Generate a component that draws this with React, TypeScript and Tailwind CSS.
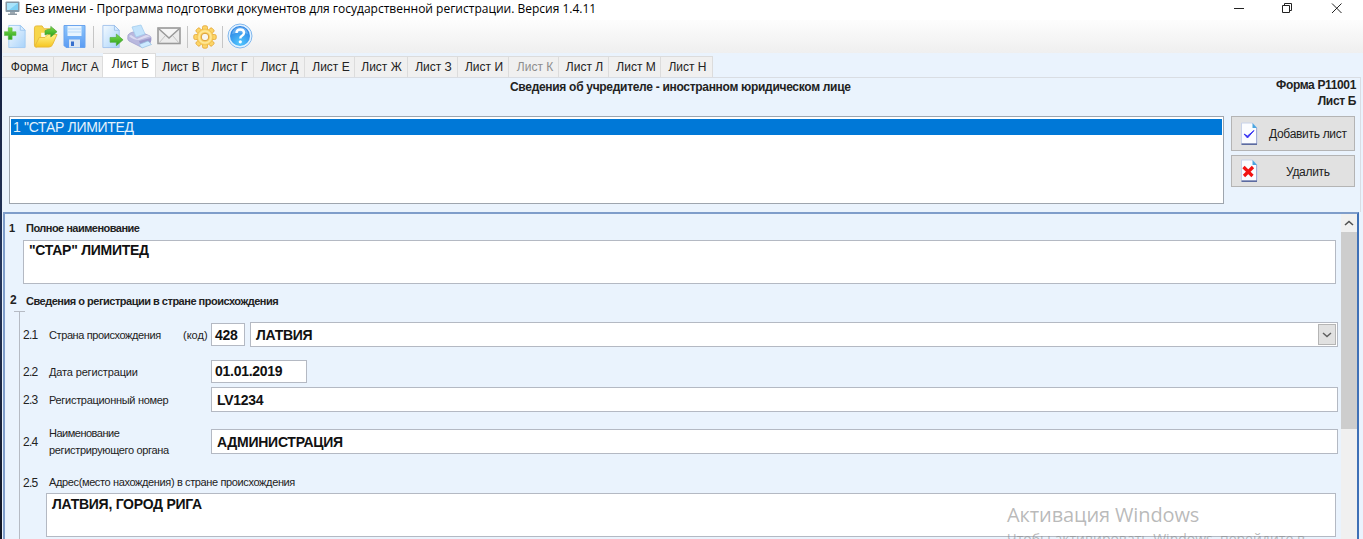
import type { ReactNode } from "react";

const tabs = [
  { label: "Форма", box: "w-[51px] h-[21px] bg-[#f0f0f0] pl-[3px]" },
  { label: "Лист А", box: "w-[49px] h-[21px] bg-[#f0f0f0] pl-[4px]" },
  { label: "Лист Б", box: "w-[53px] h-6 bg-white pb-[3px] pl-[3px]" },
  { label: "Лист В", box: "w-[48px] h-[21px] bg-[#f0f0f0] pl-[3px]" },
  { label: "Лист Г", box: "w-[50px] h-[21px] bg-[#f0f0f0] pl-[2px]" },
  { label: "Лист Д", box: "w-[51px] h-[21px] bg-[#f0f0f0] pl-[1px]" },
  { label: "Лист Е", box: "w-[50px] h-[21px] bg-[#f0f0f0] pl-[3px]" },
  { label: "Лист Ж", box: "w-[53px] h-[21px] bg-[#f0f0f0] pl-[1px]" },
  { label: "Лист З", box: "w-[50px] h-[21px] bg-[#f0f0f0] pl-[2px]" },
  { label: "Лист И", box: "w-[51px] h-[21px] bg-[#f0f0f0] pl-[2px]" },
  { label: "Лист К", box: "w-[50px] h-[21px] bg-[#f0f0f0] pl-[3px] text-[#8d8d8d]" },
  { label: "Лист Л", box: "w-[50px] h-[21px] bg-[#f0f0f0] pl-[2px]" },
  { label: "Лист М", box: "w-[52px] h-[21px] bg-[#f0f0f0] pl-[3px]" },
  { label: "Лист Н", box: "w-[52px] h-[21px] bg-[#f0f0f0] pl-[2px]" },
];

function MonitorIcon() {
  return (
    <svg width="15" height="15" viewBox="0 0 15 15">
      <rect x="0.5" y="0.5" width="14" height="10.500" rx="1" fill="#8497a5" />
      <rect x="2" y="2" width="11" height="7" fill="#7dd0f5" />
      <path d="M2 2h11L4 9H2z" fill="#a8e3fb" />
      <path d="M5 11h5v2H5z" fill="#9fabb4" />
      <path d="M3 12.600h9V14H3z" fill="#8d9aa4" />
    </svg>
  );
}

function Defs() {
  return (
    <defs>
      <linearGradient id="page" x1="0" y1="0" x2="1" y2="1">
        <stop offset="0" stopColor="#f4faff" />
        <stop offset="1" stopColor="#a9d3fa" />
      </linearGradient>
      <linearGradient id="green" x1="0" y1="0" x2="0" y2="1">
        <stop offset="0" stopColor="#7ddb4a" />
        <stop offset="1" stopColor="#27a01c" />
      </linearGradient>
      <linearGradient id="gold" x1="0" y1="0" x2="0" y2="1">
        <stop offset="0" stopColor="#fff38a" />
        <stop offset="1" stopColor="#f6c51e" />
      </linearGradient>
      <linearGradient id="disk" x1="0" y1="0" x2="0" y2="1">
        <stop offset="0" stopColor="#8cc4fb" />
        <stop offset="1" stopColor="#5b9cf3" />
      </linearGradient>
      <radialGradient id="help" cx="0.5" cy="0.85" r="0.8">
        <stop offset="0" stopColor="#52c8ff" />
        <stop offset="1" stopColor="#2b80e2" />
      </radialGradient>
    </defs>
  );
}

function NewIcon() {
  return (
    <svg width="23" height="25" viewBox="0 0 23 26">
      <Defs />
      <path d="M4.500 1.500h12l5 5v18h-17z" fill="url(#page)" stroke="#a4ccf2" />
      <path d="M16.500 1.500v5h5z" fill="#d9edff" stroke="#92c0ee" strokeWidth="0.800" />
      <path d="M4 4h4v4h4v4H8v4H4v-4H0V8h4z" fill="url(#green)" stroke="#5dbb43" strokeWidth="0.600" />
    </svg>
  );
}

function OpenIcon() {
  return (
    <svg width="25" height="25" viewBox="0 0 25 26">
      <path d="M1 4q0-2 2-2h6l2 3h9q2 0 2 2v7L3 24q-2 0-2-2z" fill="#f7d64a" stroke="#e5b83c" />
      <path d="M8 9h10l4-1v7L8 21z" fill="#fffbe5" />
      <path d="M1.500 23 6 14h6l3-3h9.500L20 21q-1 3-4 3H3q-1.500 0-1.500-1z" fill="url(#gold)" stroke="#e8b93a" />
      <path d="M12 7q3-2 6-1.500V2.500l6.500 5.500-6.500 5.500v-3q-4-.500-6 1z" fill="url(#green)" stroke="#4aa33c" strokeWidth="0.700" />
    </svg>
  );
}

function SaveIcon() {
  return (
    <svg width="23" height="25" viewBox="0 0 23 25">
      <path d="M1 1.500h21v22H3l-2-2z" fill="url(#disk)" stroke="#6ba4ee" />
      <path d="M4.500 2h14v10h-14z" fill="#e8f4ff" />
      <path d="M4.500 5h14M4.500 8h14" stroke="#b8d9f8" />
      <path d="M6 15.500h11v8H6z" fill="#dce6f2" />
      <path d="M8 17.500h3V22H8z" fill="#376fce" />
    </svg>
  );
}

function ExportIcon() {
  return (
    <svg width="23" height="25" viewBox="0 0 23 26">
      <path d="M1.500 1.500h12l5 5v18h-17z" fill="url(#page)" stroke="#a4c4ec" />
      <path d="M13.500 1.500v5h5z" fill="#d9edff" stroke="#92b8e8" strokeWidth="0.800" />
      <path d="M9 14h6.500v-3.500l7 6-7 6V19H9z" fill="url(#green)" stroke="#4fa93c" strokeWidth="0.700" />
    </svg>
  );
}

function PrintIcon() {
  return (
    <svg width="25" height="25" viewBox="0 0 25 25">
      <path d="M1 11q1-2 5-3l10 1 7 3q1.500 1 1 4l-1 3-9 4-12-6Q0 16 1 11z" fill="#b9b8de" stroke="#a3a2cf" strokeWidth="0.800" />
      <path d="M5 3 14 1l4 9-9 3z" fill="#c4e4fc" stroke="#a3cdee" strokeWidth="0.800" />
      <path d="M2 12q4 4 10 4l12-4-5-1-9 4-6-4z" fill="#dcdbf1" />
      <path d="M12 17l12-3v4l-10 4z" fill="#9a98cb" />
      <path d="M12 20.500 21 17l3.500 3.500L15 24z" fill="#cdeaff" stroke="#94bfe0" strokeWidth="0.700" />
    </svg>
  );
}

function MailIcon() {
  return (
    <svg width="24" height="18" viewBox="0 0 24 18">
      <rect x="1" y="1" width="22" height="15.500" fill="#ececec" stroke="#9a9a9a" strokeWidth="1.600" />
      <path d="M2 2h20L12 11z" fill="#f6f6f6" />
      <path d="M2 2 12 11 22 2" fill="none" stroke="#999" strokeWidth="1.500" />
      <path d="M2 16l6-7M22 16l-6-7" stroke="#c4c4c4" />
    </svg>
  );
}

const teeth = [0, 45, 90, 135, 180, 225, 270, 315];

function GearIcon() {
  return (
    <svg width="24" height="24" viewBox="0 0 24 24">
      {teeth.map((a) => (
        <rect key={a} x="9.500" y="0.800" width="5" height="6" rx="1.500" fill="#fcd566" stroke="#e6ab40" strokeWidth="0.900" transform={`rotate(${a} 12 12)`} />
      ))}
      <circle cx="12" cy="12" r="8" fill="#fcd769" stroke="#ecb545" strokeWidth="0.600" />
      <circle cx="12" cy="12" r="6" fill="none" stroke="#ffe79a" strokeWidth="1.500" />
      <circle cx="12" cy="12" r="3.800" fill="#f8f5ef" stroke="#dc9c2e" />
    </svg>
  );
}

function HelpIcon() {
  return (
    <svg width="26" height="26" viewBox="0 0 26 26">
      <circle cx="13" cy="13" r="12" fill="#e2f2ff" stroke="#82b8ee" />
      <circle cx="13" cy="13" r="10" fill="url(#help)" />
      <path d="M5 11q1-7 8-7t8 7q-8-3-16 0z" fill="#79bcf5" opacity="0.700" />
      <path d="M9.500 10q0-3.500 3.700-3.500T17 9.700q0 1.800-2 3.100-1.700 1-1.700 2.700" fill="none" stroke="#fff" strokeWidth="2.400" />
      <circle cx="13.300" cy="18.800" r="1.600" fill="#fff" />
    </svg>
  );
}

function SheetIcon({ children }: { children: ReactNode }) {
  return (
    <svg width="17" height="24" viewBox="0 0 17 24">
      <path d="M0.500 1h11l4.500 5v16H0.500z" fill="#fbfcff" stroke="#c8d2ea" />
      <path d="M11.500 1v5H16z" fill="#4ba5e0" />
      <path d="M15.500 6v16" stroke="#a5b0d6" />
      <path d="M0.500 22.200H16" stroke="#5c6ba0" strokeWidth="1.600" />
      {children}
    </svg>
  );
}

function Separator({ className }: { className: string }) {
  return <div className={"h-[22px] w-px bg-[#c6c6c6] " + className} />;
}

function Field({ className, children }: { className: string; children?: ReactNode }) {
  return (
    <div className={"flex shrink-0 border border-[#b4b9c3] bg-white text-[14px] leading-4 font-bold tracking-[-0.270px] whitespace-nowrap text-[#111] " + className}>
      {children}
    </div>
  );
}

function Num({ children }: { children: ReactNode }) {
  return <span className="w-[26px] shrink-0 text-[12px] tracking-[-0.700px]">{children}</span>;
}

export default function App() {
  return (
    <div className="relative flex h-[539px] w-[1363px] overflow-hidden bg-[#eaf3fd] font-['Liberation_Sans',sans-serif] text-[#222]">
      <div className="w-[2px] shrink-0 bg-linear-to-b from-[#101a38] via-[#25365c] to-[#111522]" />
      <div className="flex min-w-0 flex-1 flex-col">
        <header className="flex h-5 shrink-0 items-center bg-white pl-[3px]">
          <div className="pb-[4px]"><MonitorIcon /></div>
          <span className="ml-[5px] pb-[3px] font-['Open_Sans',sans-serif] text-[12px] leading-4 whitespace-nowrap text-black">
            Без имени - Программа подготовки документов для государственной регистрации. Версия 1.4.11
          </span>
          <div className="mr-5 ml-auto flex items-center pb-1">
            <svg width="110" height="12" viewBox="0 0 110 12" fill="none" stroke="#222">
              <path d="M1 6.500h10" />
              <path d="M49.500 3.500h7v7h-7zM51.500 3.500v-2h7v7h-2" />
              <path d="m99 1.500 9.500 9.500M108.500 1.500 99 11" />
            </svg>
          </div>
        </header>

        <div className="flex h-[33px] shrink-0 items-center bg-linear-to-b from-[#fdfdfd] to-[#efefef] pl-[2px]">
          <NewIcon />
          <div className="ml-[6px]"><OpenIcon /></div>
          <div className="ml-[5px]"><SaveIcon /></div>
          <Separator className="ml-[7px]" />
          <div className="ml-[7px]"><ExportIcon /></div>
          <div className="ml-[3px]"><PrintIcon /></div>
          <div className="ml-[5px] pb-px"><MailIcon /></div>
          <Separator className="ml-[6px]" />
          <div className="ml-[5px]"><GearIcon /></div>
          <Separator className="ml-[5px]" />
          <div className="ml-[4px] pb-px"><HelpIcon /></div>
        </div>

        <nav className="flex h-6 shrink-0 items-end pl-px">
          {tabs.map((t) => (
            <div key={t.label} className={"flex shrink-0 items-center justify-center border-t border-r border-[#dcdcdc] text-[12px] leading-4 whitespace-nowrap " + t.box}>
              {t.label}
            </div>
          ))}
        </nav>

        <div className="flex min-h-0 flex-1 flex-col">
          <div className="mr-[2px] flex h-[135px] shrink-0 flex-col border-t border-r border-[#d9dde3]">
            <div className="flex h-[38px] shrink-0 justify-between pr-[4px] pl-[508px] text-[12px] font-bold whitespace-nowrap">
              <div className="pt-px leading-4 tracking-[-0.300px]">Сведения об учредителе - иностранном юридическом лице</div>
              <div className="text-right leading-[15px] tracking-[-0.350px]">
                <div>Форма Р11001</div>
                <div className="pt-px">Лист Б</div>
              </div>
            </div>
            <div className="flex pl-[7px]">
              <div className="h-[88px] w-[1215px] border border-[#9ea5ae] bg-white p-px pt-[2px]">
                <div className="h-4 bg-[#0078d7] pl-[2px] text-[14px] leading-4 tracking-[-0.300px] text-[#e5f2fc]">1 "СТАР ЛИМИТЕД</div>
              </div>
              <div className="ml-[7px] flex flex-col gap-1 text-[12px] tracking-[-0.300px]">
                <button className="flex h-[35px] w-[124px] items-center border border-[#b4b4b4] bg-[#e1e1e1] pl-[9px]">
                  <SheetIcon><path d="m3 12 3.500 4L13 8.500 6.500 14z" fill="#3b37f3" stroke="#3b37f3" /></SheetIcon>
                  <span className="ml-[11px] whitespace-nowrap">Добавить лист</span>
                </button>
                <button className="flex h-8 w-[124px] items-center border border-[#b4b4b4] bg-[#e1e1e1] pl-[9px]">
                  <SheetIcon><path d="m2.500 8 9 9M12 8l-9 9" stroke="#f21212" strokeWidth="3.200" /></SheetIcon>
                  <span className="ml-7 pt-px whitespace-nowrap">Удалить</span>
                </button>
              </div>
            </div>
          </div>

          <div className="mr-1 ml-px flex min-h-0 flex-1 border-t-2 border-r-2 border-l-2 border-t-[#7f9dca] border-r-[#3f70b6] border-l-[#7f9dca]">
            <main className="flex w-[1336px] shrink-0 flex-col overflow-hidden text-[11px]">
              <div className="flex h-[26px] shrink-0 items-center pt-[2px] pl-1 font-bold whitespace-nowrap">
                <span className="w-[17px]">1</span>
                <span className="tracking-[-0.520px]">Полное наименование</span>
              </div>
              <Field className="ml-[18px] h-11 w-[1313px] pt-px pl-[5px]">"СТАР" ЛИМИТЕД</Field>
              <div className="flex h-[27px] shrink-0 items-end pb-[2px] pl-[5px] font-bold whitespace-nowrap">
                <span className="w-4 text-[12px]">2</span>
                <span className="tracking-[-0.490px]">Сведения о регистрации в стране происхождения</span>
              </div>
              <div className="ml-[9px] h-px w-[11px] shrink-0 bg-[#b6bbc4]" />
              <section className="ml-[14px] flex h-[240px] shrink-0 flex-col border-l border-[#b6bbc4] pt-[10px] pl-[3px] whitespace-nowrap">
                <div className="flex h-[25px] shrink-0 items-center">
                  <Num>2.1</Num>
                  <span className="w-[134px] pt-[2px] tracking-[-0.400px]">Страна происхождения</span>
                  <span className="w-7 pt-px">(код)</span>
                  <Field className="h-[23px] w-[34px] items-center pl-[3px]">428</Field>
                  <Field className="ml-[5px] h-[25px] w-[1088px] items-center justify-between pr-px pl-[5px]">
                    <span>ЛАТВИЯ</span>
                    <span className="flex h-[21px] w-[18px] items-center justify-center border border-[#b5b5b5] bg-[#e1e1e1]">
                      <svg width="10" height="6" viewBox="0 0 10 6"><path d="m1 1 4 3.500L9 1" fill="none" stroke="#606060" strokeWidth="1.500" /></svg>
                    </span>
                  </Field>
                </div>
                <div className="mt-[13px] flex h-[23px] shrink-0 items-center">
                  <Num>2.2</Num>
                  <span className="w-[162px] pt-[2px] tracking-[-0.150px]">Дата регистрации</span>
                  <Field className="h-[23px] w-[96px] items-center pb-px pl-[3px]">01.01.2019</Field>
                </div>
                <div className="mt-1 flex h-[25px] shrink-0 items-center">
                  <Num>2.3</Num>
                  <span className="w-[162px] pt-[2px] tracking-[-0.300px]">Регистрационный номер</span>
                  <Field className="h-[25px] w-[1127px] items-center pl-[5px]">LV1234</Field>
                </div>
                <div className="mt-[17px] flex h-[25px] shrink-0 items-center">
                  <Num>2.4</Num>
                  <span className="w-[162px] pt-px leading-[17px] tracking-[-0.340px]"><span className="tracking-[-0.500px]">Наименование</span><br />регистрирующего органа</span>
                  <Field className="h-[25px] w-[1127px] items-center pl-[5px]">АДМИНИСТРАЦИЯ</Field>
                </div>
                <div className="mt-[19px] flex h-5 shrink-0 items-center pb-px">
                  <Num>2.5</Num>
                  <span className="tracking-[-0.370px]">Адрес(место нахождения) в стране происхождения</span>
                </div>
                <Field className="ml-[23px] h-[44px] w-[1290px] pt-[2px] pl-[5px]">ЛАТВИЯ, ГОРОД РИГА</Field>
              </section>
            </main>
            <div className="flex flex-1 flex-col bg-[#f0f0f0]">
              <div className="flex h-[18px] shrink-0 items-center justify-center">
                <svg width="10" height="6" viewBox="0 0 10 6"><path d="m1 5 4-3.500L9 5" fill="none" stroke="#505050" strokeWidth="1.600" /></svg>
              </div>
              <div className="h-[197px] bg-[#cdcdcd]" />
            </div>
          </div>
        </div>
      </div>

      <div className="absolute top-[501px] left-[1007px] font-['Open_Sans',sans-serif] whitespace-nowrap text-[#8b8b8b]/60">
        <div className="text-[20px] leading-7 tracking-[-0.120px]">Активация Windows</div>
        <div className="text-[14px] leading-5">Чтобы активировать Windows, перейдите в</div>
      </div>
    </div>
  );
}
